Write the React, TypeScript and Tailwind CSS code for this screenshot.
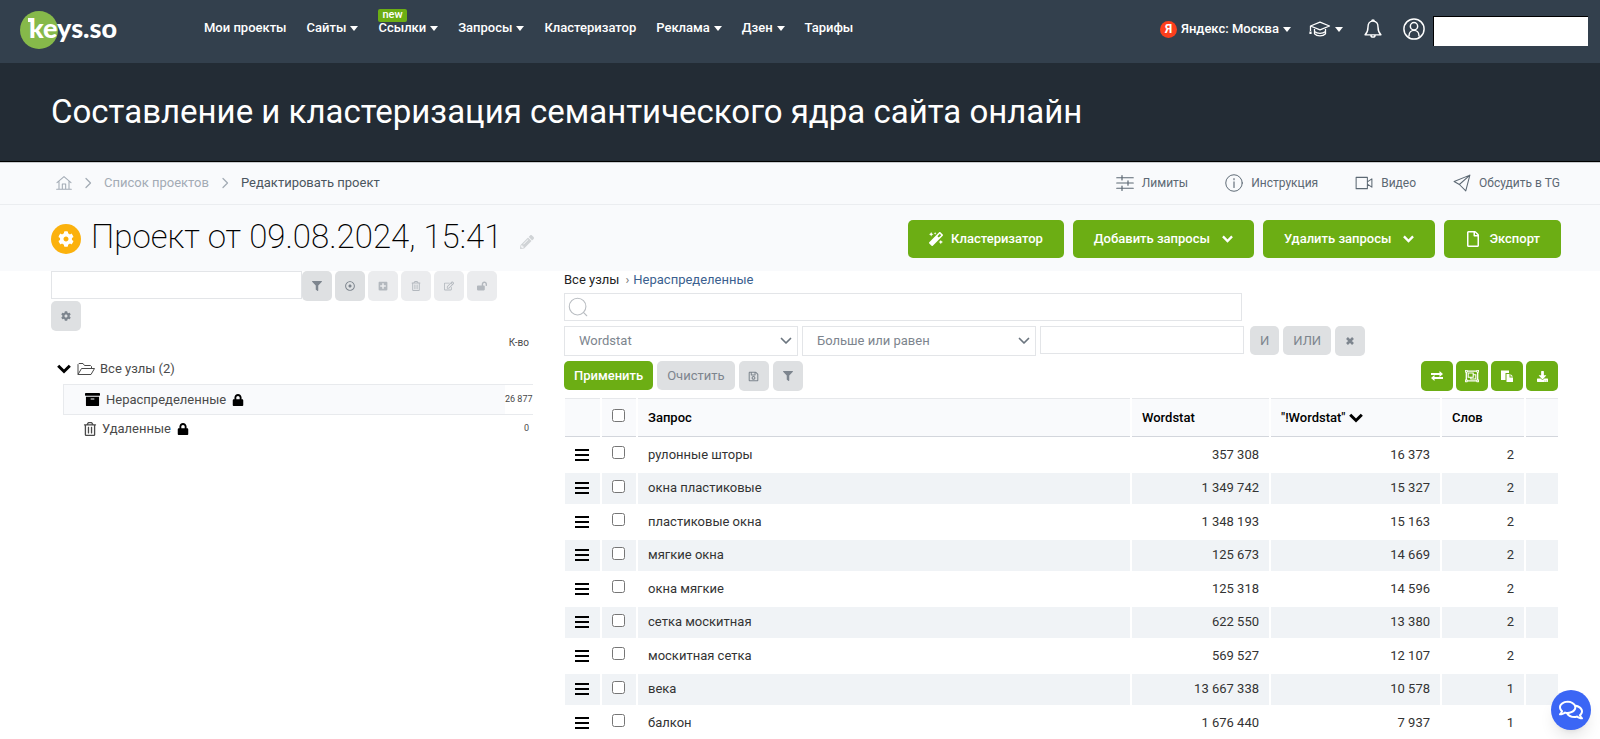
import type { ReactNode } from "react";
import {
  FaArchive,
  FaCog,
  FaDownload,
  FaFilter,
  FaLock,
  FaLockOpen,
  FaMagic,
  FaPencilAlt,
  FaPlusSquare,
  FaRegComments,
  FaRegDotCircle,
  FaRegEdit,
  FaRegFile,
  FaRegObjectGroup,
  FaRegSave,
  FaRegTrashAlt,
} from "react-icons/fa";

const navItems = [
  { title: "Мои проекты" },
  { title: "Сайты", menu: true },
  { title: "Ссылки", menu: true, badge: "new" },
  { title: "Запросы", menu: true },
  { title: "Кластеризатор" },
  { title: "Реклама", menu: true },
  { title: "Дзен", menu: true },
  { title: "Тарифы" },
];

const rows = [
  { query: "рулонные шторы", ws: "357 308", exact: "16 373", words: 2 },
  { query: "окна пластиковые", ws: "1 349 742", exact: "15 327", words: 2 },
  { query: "пластиковые окна", ws: "1 348 193", exact: "15 163", words: 2 },
  { query: "мягкие окна", ws: "125 673", exact: "14 669", words: 2 },
  { query: "окна мягкие", ws: "125 318", exact: "14 596", words: 2 },
  { query: "сетка москитная", ws: "622 550", exact: "13 380", words: 2 },
  { query: "москитная сетка", ws: "569 527", exact: "12 107", words: 2 },
  { query: "века", ws: "13 667 338", exact: "10 578", words: 1 },
  { query: "балкон", ws: "1 676 440", exact: "7 937", words: 1 },
];

function Stroke({ className, children }: { className: string; children: ReactNode }) {
  return (
    <svg
      viewBox="0 0 24 24"
      fill="none"
      stroke="currentColor"
      strokeLinecap="round"
      strokeLinejoin="round"
      className={className}
      aria-hidden="true"
    >
      {children}
    </svg>
  );
}

function Chevron({ className }: { className: string }) {
  return (
    <svg viewBox="0 0 14 10" fill="none" stroke="currentColor" strokeWidth="3" className={className} aria-hidden="true">
      <path d="m1.200 1.700 5.800 5.800 5.800-5.800" />
    </svg>
  );
}

function Caret() {
  return (
    <svg viewBox="0 0 8 5" fill="currentColor" className="w-2 h-[5px]" aria-hidden="true">
      <path d="M0 0h8L4 5z" />
    </svg>
  );
}

function Logo() {
  return (
    <a href="#" className="relative block w-[98px] h-[39px]">
      <span className="absolute left-0 top-0 size-[38px] rounded-full bg-[#86b94a]"></span>
      <span className="absolute left-2 top-[7px] w-[6px] h-1 bg-white"></span>
      <span className="absolute left-[9px] top-px font-[Lato] font-black text-[27px] leading-8 text-white">
        keys.so
      </span>
    </a>
  );
}

function Navbar() {
  return (
    <header className="h-[63px] bg-[#33404d] flex items-start text-white text-[13px] font-medium leading-4 pl-5 pr-3">
      <div className="pt-[11px]">
        <Logo />
      </div>
      <nav className="flex gap-5 pl-[86px] pt-5">
        {navItems.map((item) => (
          <a href="#" key={item.title} className="relative flex items-center gap-1">
            {item.badge && (
              <span className="absolute left-0 -top-[11px] h-[13px] px-1 rounded-xs bg-[#6cae14] text-[11px] leading-3">
                {item.badge}
              </span>
            )}
            {item.title}
            {item.menu && <Caret />}
          </a>
        ))}
      </nav>
      <div className="ml-auto flex items-center h-[58px]">
        <button className="flex items-center gap-1">
          <span className="size-[17px] rounded-full bg-[#fc3f1d] text-[12px] font-bold text-center">Я</span>
          Яндекс: Москва
          <Caret />
        </button>
        <button className="ml-[18px] flex items-center gap-1" aria-label="Обучение">
          <svg viewBox="0 0 22 16" fill="none" stroke="currentColor" strokeLinejoin="round" className="w-[22px] h-4">
            <path d="M1.500 5 11 1.200 20.500 5 11 8.800zM5.500 6.800v6c2.500 2.800 8.500 2.800 11 0v-6M5.500 10.500c3 2.500 8 2.500 11 0M1.500 5v5" strokeWidth="1.300" />
            <path d="M1.500 10.500v2.500" strokeWidth="2.200" />
          </svg>
          <Caret />
        </button>
        <button className="ml-5" aria-label="Уведомления">
          <Stroke className="w-5 h-6">
            <path d="M12 2.500c-4.500 0-6 3.500-6 7 0 5-1.500 7.500-3.500 9.500h19c-2-2-3.500-4.500-3.500-9.500 0-3.500-1.500-7-6-7zM10.500 2.500a1.500 1.500 0 0 1 3 0M9.500 19.500c0 3 5 3 5 0" strokeWidth="1.700" />
          </Stroke>
        </button>
        <button className="ml-5" aria-label="Профиль">
          <Stroke className="size-[22px]">
            <circle cx="12" cy="12" r="11" strokeWidth="1.600" />
            <circle cx="12" cy="9" r="4" strokeWidth="1.600" />
            <path d="M6.500 19.500c0-8 11-8 11 0" strokeWidth="1.600" />
          </Stroke>
        </button>
        <div className="ml-2 mt-1 w-[155px] h-[30px] bg-white border-t border-l border-black"></div>
      </div>
    </header>
  );
}

function Crumb() {
  return (
    <Stroke className="size-3 text-[#a3abb5]">
      <path d="m8 3 9 9-9 9" strokeWidth="2.500" />
    </Stroke>
  );
}

function Breadcrumbs() {
  return (
    <div className="h-[43px] border-t border-b border-t-[#c9cccf] border-b-[#ebedf0] bg-[#f9fafc] flex items-center justify-between pl-[56px] pr-10 text-[13px] text-[#5c6873]">
      <div className="flex items-center gap-2.5 pb-0.5">
        <a href="#" aria-label="Главная" className="text-[#a3abb5]">
          <Stroke className="size-4">
            <path d="M1.500 11.500 12 2.500l10.500 9M4.500 9.500V21.500h15V9.500M9.500 21.500v-8h5v8M1 21.500h22" strokeWidth="1.600" />
          </Stroke>
        </a>
        <Crumb />
        <a href="#" className="text-[#a3abb5]">Список проектов</a>
        <Crumb />
        <span className="text-[#4b5660]">Редактировать проект</span>
      </div>
      <div className="flex items-center gap-[37px] pb-px text-xs">
        <a href="#" className="flex items-center gap-2">
          <Stroke className="size-[18px]">
            <path d="M1 5h22M1 12h22M1 19h22M8 2v6M16 9v6M8 16v6" strokeWidth="1.600" />
          </Stroke>
          Лимиты
        </a>
        <a href="#" className="flex items-center gap-2">
          <Stroke className="size-[18px]">
            <circle cx="12" cy="12" r="11" strokeWidth="1.300" />
            <path d="M12 10.500V18M12 6v1.500" strokeWidth="1.500" />
          </Stroke>
          Инструкция
        </a>
        <a href="#" className="flex items-center gap-2">
          <Stroke className="size-[18px]">
            <path d="M1.500 4.500h15v15h-15zM16.500 10.500l6-4v11l-6-4" strokeWidth="1.400" />
          </Stroke>
          Видео
        </a>
        <a href="#" className="flex items-center gap-2">
          <Stroke className="size-[18px]">
            <path d="M22.500 1.500 1.500 10l7 4zM22.500 1.500 17 22.500l-8.500-8.500z" strokeWidth="1.400" />
          </Stroke>
          Обсудить в TG
        </a>
      </div>
    </div>
  );
}

function GreenButton({ children }: { children: ReactNode }) {
  return (
    <button className="h-[38px] px-[21px] rounded-[5px] bg-[#6cae14] text-white text-[13px] font-medium flex items-center gap-2">
      {children}
    </button>
  );
}

function ProjectBar() {
  return (
    <div className="h-[66px] bg-[#f9fafc] flex items-center justify-between pl-[51px] pr-[39px] pt-px">
      <div className="flex items-center">
        <span className="size-[30px] rounded-full bg-[#fbb10d] text-white flex items-center justify-center">
          <FaCog className="size-4" />
        </span>
        <h2 className="ml-2.5 mb-1 text-[33px] leading-10 font-extralight text-black">Проект от 09.08.2024, 15:41</h2>
        <button className="ml-[18px] mt-1.5 text-[#d0d3d6]" aria-label="Переименовать">
          <FaPencilAlt className="size-[14px]" />
        </button>
      </div>
      <div className="flex gap-[9px]">
        <GreenButton>
          <FaMagic className="size-[14px]" />
          Кластеризатор
        </GreenButton>
        <GreenButton>
          Добавить запросы
          <Chevron className="ml-1 w-[11px] h-2" />
        </GreenButton>
        <GreenButton>
          Удалить запросы
          <Chevron className="ml-1 w-[11px] h-2" />
        </GreenButton>
        <GreenButton>
          <FaRegFile className="size-4" />
          Экспорт
        </GreenButton>
      </div>
    </div>
  );
}

function ToolButton({ label, faded, children }: { label: string; faded?: boolean; children: ReactNode }) {
  return (
    <button
      aria-label={label}
      className={`${
        faded ? "bg-[#ebecee] text-[#b3b8be]" : "bg-[#dee0e2] text-[#7d858e]"
      } size-[30px] rounded-[5px] flex items-center justify-center text-[10px]`}
    >
      {children}
    </button>
  );
}

function Sidebar() {
  return (
    <aside className="text-[13px] text-[#4a4a4a]">
      <div className="flex items-start">
        <input
          type="text"
          aria-label="Поиск узла"
          className="w-[251px] h-7 bg-white border border-[#e3e5e8] outline-none"
        />
        <div className="flex gap-[3px]">
          <ToolButton label="Фильтр"><FaFilter /></ToolButton>
          <ToolButton label="Показать"><FaRegDotCircle /></ToolButton>
          <ToolButton label="Добавить" faded><FaPlusSquare /></ToolButton>
          <ToolButton label="Удалить" faded><FaRegTrashAlt /></ToolButton>
          <ToolButton label="Изменить" faded><FaRegEdit /></ToolButton>
          <ToolButton label="Разблокировать" faded><FaLockOpen /></ToolButton>
        </div>
      </div>
      <ToolButton label="Настройки"><FaCog /></ToolButton>
      <div className="h-6 pr-1 text-right text-[10px] leading-6">К-во</div>
      <div className="h-[29px] pb-0.5 pl-1.5 flex items-center">
        <Chevron className="w-[14px] h-2.5 text-black" />
        <svg viewBox="0 0 18 14" fill="none" stroke="currentColor" className="ml-1.5 mr-[5px] w-[18px] h-[14px]" aria-hidden="true">
          <path d="M1 12.500V2.500l1-1h4l1.500 2h6l1 1v2M1 12.500l3.500-6h13l-3.500 6z" strokeLinejoin="round" />
        </svg>
        Все узлы (2)
      </div>
      <div className="ml-3 h-[31px] border border-r-0 border-[#e8eaed] flex items-center">
        <div className="flex-1 h-full pl-[21px] bg-[#f9fafc] flex items-center">
          <FaArchive className="mr-1.5 size-[15px] text-black" />
          Нераспределенные
          <FaLock className="ml-1.5 size-3 text-black" />
        </div>
        <span className="w-7 pr-0.5 text-right text-[9px] whitespace-nowrap">26 877</span>
      </div>
      <div className="h-[29px] pb-0.5 pl-8 pr-1 flex items-center">
        <FaRegTrashAlt className="mr-[5px] size-[14px]" />
        Удаленные
        <FaLock className="ml-1.5 size-3 text-black" />
        <span className="ml-auto text-[9px]">0</span>
      </div>
    </aside>
  );
}

function Select({ label, value }: { label: string; value: string }) {
  return (
    <div className="relative w-[234px]">
      <select
        aria-label={label}
        defaultValue={value}
        className="w-full h-[30px] pl-3.5 appearance-none bg-white border border-[#e3e5e8] text-[13px] text-[#7d858e]"
      >
        <option>{value}</option>
      </select>
      <Stroke className="absolute right-1.5 top-[9px] size-3 text-[#6b757f] pointer-events-none">
        <path d="m3 7 9 9 9-9" strokeWidth="3.500" />
      </Stroke>
    </div>
  );
}

function ActionButton({ label, children }: { label: string; children: ReactNode }) {
  return (
    <button
      aria-label={label}
      className="w-8 h-[30px] rounded-[5px] bg-[#6cae14] text-white text-xs flex items-center justify-center"
    >
      {children}
    </button>
  );
}

function Filters() {
  return (
    <div>
      <div className="h-[22px] text-[13px] leading-[18px] text-[#222]">
        <a href="#">Все узлы</a>
        <span className="ml-1.5 mr-1 text-[#777]">›</span>
        <a href="#" className="text-[#3b5f8f]">Нераспределенные</a>
      </div>
      <div className="relative w-[678px]">
        <input
          type="search"
          aria-label="Поиск запроса"
          className="w-full h-7 pl-8 bg-white border border-[#e3e5e8] outline-none"
        />
        <Stroke className="absolute left-1 top-1 size-5 text-[#b9bdc2]">
          <circle cx="11.500" cy="11.500" r="10" strokeWidth="1.300" />
          <path d="m18.500 18.500 4 4" strokeWidth="1.300" />
        </Stroke>
      </div>
      <div className="mt-[5px] flex items-start gap-1">
        <Select label="Колонка" value="Wordstat" />
        <Select label="Условие" value="Больше или равен" />
        <input
          type="text"
          aria-label="Значение"
          className="w-[204px] h-7 bg-white border border-[#e3e5e8] outline-none"
        />
        <button className="ml-0.5 h-[29px] px-2.5 rounded-[5px] bg-[#dee0e2] text-[13px] text-[#7d858e]">И</button>
        <button className="h-[29px] px-2.5 rounded-[5px] bg-[#dee0e2] text-[13px] text-[#7d858e]">ИЛИ</button>
        <ToolButton label="Убрать">
          <svg viewBox="0 0 8 8" stroke="currentColor" strokeWidth="2.600" className="size-2">
            <path d="m1 1 6 6M7 1 1 7" />
          </svg>
        </ToolButton>
      </div>
      <div className="mt-[5px] flex items-start gap-1">
        <button className="h-[29px] px-2.5 rounded-[5px] bg-[#6cae14] text-[13px] font-medium text-white">
          Применить
        </button>
        <button className="h-[29px] px-2.5 rounded-[5px] bg-[#dee0e2] text-[13px] text-[#7d858e]">Очистить</button>
        <ToolButton label="Сохранить"><FaRegSave className="size-[11px]" /></ToolButton>
        <ToolButton label="Фильтры"><FaFilter /></ToolButton>
        <div className="ml-auto pr-[3px] flex gap-[3px]">
          <ActionButton label="Перенести">
            <svg viewBox="0 0 12 10" fill="currentColor" className="w-3 h-[10px]">
              <path d="M0 2h8.500V0L12 3 8.500 6V4H0zM12 6H3.500V4L0 7l3.500 3V8H12z" />
            </svg>
          </ActionButton>
          <ActionButton label="Группировать">
            <FaRegObjectGroup className="size-[14px]" />
          </ActionButton>
          <ActionButton label="Копировать">
            <svg viewBox="0 0 12 12" fill="currentColor" className="size-3">
              <path d="M0 .5h8V3H4.500v7H0z" />
              <path d="M5.500 4h3v3.500H12V12H5.500zM9.500 4 12 6.500H9.500z" />
            </svg>
          </ActionButton>
          <ActionButton label="Скачать">
            <FaDownload className="size-[11px]" />
          </ActionButton>
        </div>
      </div>
    </div>
  );
}

function Queries() {
  return (
    <div className="-ml-px mt-[5px] pr-px">
      <table className="w-full table-fixed border-separate border-spacing-[2px] text-[13px] text-[#333]">
        <colgroup>
          <col className="w-[35px]" />
          <col className="w-[34px]" />
          <col />
          <col className="w-[137px]" />
          <col className="w-[169px]" />
          <col className="w-[82px]" />
          <col className="w-8" />
        </colgroup>
        <thead>
          <tr className="h-[39px] text-left text-black *:bg-[#f9fafc] *:border-t *:border-t-[#e6e8eb] *:border-b *:border-b-[#d3d6dc] *:font-medium *:py-0">
            <th></th>
            <th className="px-2.5">
              <input type="checkbox" aria-label="Выбрать все" className="block size-[13px] mb-1" />
            </th>
            <th className="px-2.5">Запрос</th>
            <th className="px-2.5">Wordstat</th>
            <th className="px-2.5">
              "!Wordstat" <Chevron className="inline w-[14px] h-2.5" />
            </th>
            <th className="px-2.5">Слов</th>
            <th></th>
          </tr>
        </thead>
        <tbody>
          {rows.map((row) => (
            <tr key={row.query} className="h-8 even:h-[31px] even:*:bg-[#f0f3f6] *:pt-0 *:pb-px">
              <td className="px-2.5">
                <svg viewBox="0 0 14 12" className="block w-[14px] h-3 text-black" aria-hidden="true">
                  <path d="M0 1h14M0 6h14M0 11h14" stroke="currentColor" strokeWidth="2" />
                </svg>
              </td>
              <td className="px-2.5">
                <input type="checkbox" aria-label={row.query} className="block size-[13px] mb-1" />
              </td>
              <td className="px-2.5">{row.query}</td>
              <td className="px-2.5 text-right">{row.ws}</td>
              <td className="px-2.5 text-right">{row.exact}</td>
              <td className="px-2.5 text-right">{row.words}</td>
              <td></td>
            </tr>
          ))}
        </tbody>
      </table>
    </div>
  );
}

export default function App() {
  return (
    <div className="min-h-screen bg-white font-[Roboto,sans-serif]">
      <Navbar />
      <div className="h-[99px] bg-[#232c35] border-b border-black pl-[51px] flex items-center">
        <h1 className="text-[33px] leading-10 text-white">
          Составление и кластеризация семантического ядра сайта онлайн
        </h1>
      </div>
      <Breadcrumbs />
      <ProjectBar />
      <main className="pl-[51px] pr-[39px] grid grid-cols-[482px_1fr] gap-x-[31px]">
        <Sidebar />
        <section>
          <Filters />
          <Queries />
        </section>
      </main>
      <button
        aria-label="Чат"
        className="fixed right-[9px] bottom-[9px] size-10 rounded-full bg-[#3b66f5] text-white shadow-lg flex items-center justify-center"
      >
        <FaRegComments className="size-6" />
      </button>
    </div>
  );
}
